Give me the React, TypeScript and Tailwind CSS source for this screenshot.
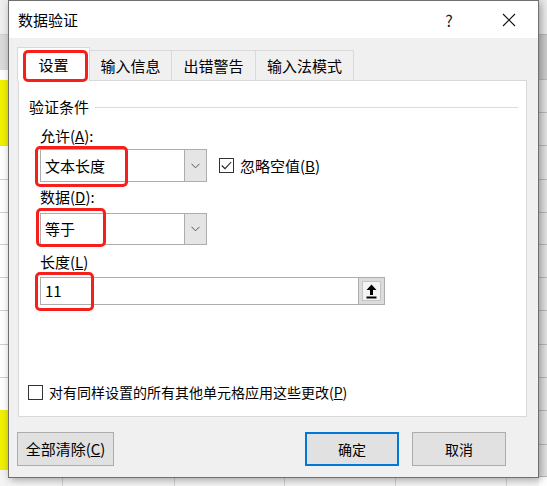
import React from "react";

const leftRows: [number, string, boolean][] = [
  [35, "bg-[#efefef]", true],
  [35, "bg-[#dadada]", false],
  [10, "bg-white", false],
  [66, "bg-[#f0f000]", true],
  [34, "bg-white", true],
  [33, "bg-white", true],
  [32, "bg-white", true],
  [33, "bg-white", true],
  [33, "bg-white", true],
  [34, "bg-white", true],
  [33, "bg-white", true],
  [32, "bg-white", false],
  [60, "bg-[#f0f000]", false],
  [16, "bg-[#f4f4f4]", false],
];

const rightRows: [number, string][] = [
  [35, "bg-[#ececec]"],
  [45, "bg-[#cdcdcd]"],
  [33, "bg-[#e4e4e4]"],
  [33, "bg-[#e4e4e4]"],
  [34, "bg-[#e4e4e4]"],
  [33, "bg-[#e4e4e4]"],
  [32, "bg-[#e4e4e4]"],
  [33, "bg-[#e4e4e4]"],
  [33, "bg-[#e4e4e4]"],
  [34, "bg-[#e4e4e4]"],
  [33, "bg-[#e4e4e4]"],
  [33, "bg-[#e4e4e4]"],
  [34, "bg-[#e4e4e4]"],
  [32, "bg-[#e4e4e4]"],
];

function Red({ className }: { className: string }) {
  return <div className={`absolute border-[3px] border-[#f5201c] rounded-[5px] pointer-events-none ${className}`} />;
}

function Chevron() {
  return (
    <svg width="9" height="6" viewBox="0 0 9 6" className="text-[#555]">
      <path d="M0.5 0.8 L4.5 4.8 L8.5 0.8" fill="none" stroke="currentColor" strokeWidth="1" />
    </svg>
  );
}

function Combo({ value, h }: { value: string; h: string }) {
  return (
    <div className={`flex w-[167px] ${h} border border-[#adadad] bg-white`}>
      <div className="flex-1 flex items-center pl-[4px] text-[15px]">{value}</div>
      <div className="w-[22px] flex items-center justify-center bg-[#e5e5e5] border-l border-[#adadad]">
        <Chevron />
      </div>
    </div>
  );
}

function Tab({ label, w }: { label: string; w: string }) {
  return (
    <div className={`${w} h-[30px] -ml-px border border-b-0 border-[#d9d9d9] bg-[#f0f0f0] flex items-center justify-center text-[15px]`}>
      {label}
    </div>
  );
}

export default function App() {
  return (
    <div className="w-[547px] h-[486px] overflow-hidden flex font-['Noto_Sans_CJK_SC',sans-serif] text-black leading-[20px]">
      {/* sheet behind, left */}
      <div className="w-[8px] shrink-0 flex flex-col">
        {leftRows.map(([h, bg, line], i) => (
          <div key={i} style={{ height: h }} className={`${bg} ${line ? "border-b border-[#d0d0d0]" : ""}`} />
        ))}
      </div>

      <div className="w-[531px] shrink-0 flex flex-col">
        {/* dialog */}
        <div className="relative z-10 h-[478px] border border-[#707070] bg-[#f0f0f0] flex flex-col shadow-[2px_2px_8px_rgba(0,0,0,0.35)]">
          <div className="h-[37px] bg-white flex items-center pl-[9px] text-[15px]">
            <span className="flex-1">数据验证</span>
            <span className="w-[20px] text-center text-[#222] text-[16px] mr-[43px]">?</span>
            <svg width="14" height="14" viewBox="0 0 14 14" className="mr-[22px]">
              <path d="M1 1 L13 13 M13 1 L1 13" stroke="#111" strokeWidth="1.1" />
            </svg>
          </div>

          <div className="flex-1 pt-[9px] pl-[9px] pr-[11px] flex flex-col">
            {/* tabs */}
            <div className="flex items-end h-[33px] -ml-px relative z-10">
              <div className="relative w-[73px] h-[34px] -mb-px bg-white border border-b-0 border-[#d9d9d9] flex items-center justify-center text-[15px]">
                设置
                <Red className="left-[5px] top-[2px] w-[65px] h-[32px]" />
              </div>
              <Tab label="输入信息" w="w-[83px]" />
              <Tab label="出错警告" w="w-[85px]" />
              <Tab label="输入法模式" w="w-[99px]" />
            </div>

            {/* panel */}
            <div className="h-[337px] w-[509px] bg-white border border-[#d9d9d9] flex flex-col">
              <div className="mt-[16px] pl-[10px] flex items-center text-[15px]">
                <span>验证条件</span>
                <div className="flex-1 ml-[6px] mr-[8px] border-t border-[#dcdcdc]" />
              </div>

              <div className="pl-[21px] flex flex-col">
                <div className="mt-[9px] text-[15px]">
                  允许(<span className="underline">A</span>):
                </div>
                <div className="mt-[3px] flex items-center">
                  <div className="relative">
                    <Combo value="文本长度" h="h-[33px]" />
                    <Red className="-left-[5px] -top-[3px] w-[93px] h-[41px]" />
                  </div>
                  <div className="ml-[12px] flex items-center text-[15px]">
                    <div className="w-[15px] h-[15px] border border-[#333] flex items-center justify-center">
                      <svg width="11" height="9" viewBox="0 0 11 9">
                        <path d="M0.8 4.5 L4 7.7 L10.2 1" fill="none" stroke="#222" strokeWidth="1.1" />
                      </svg>
                    </div>
                    <span className="ml-[6px]">
                      忽略空值(<span className="underline">B</span>)
                    </span>
                  </div>
                </div>

                <div className="mt-[5px] text-[15px]">
                  数据(<span className="underline">D</span>):
                </div>
                <div className="mt-[6px] relative w-[167px]">
                  <Combo value="等于" h="h-[32px]" />
                  <Red className="-left-[4px] -top-[5px] w-[70px] h-[39px]" />
                </div>

                <div className="mt-[7px] text-[15px]">
                  长度(<span className="underline">L</span>)
                </div>
                <div className="mt-[5px] flex">
                  <div className="relative w-[318px] h-[28px] border border-[#adadad] border-r-0 bg-white flex items-center pl-[4px] text-[15px]">
                    11
                    <Red className="-left-[6px] -top-[6px] w-[59px] h-[39px]" />
                  </div>
                  <div className="w-[27px] h-[28px] bg-[#dcdcdc] border border-[#adadad] flex items-center justify-center">
                    <div className="w-[19px] h-[20px] bg-[#f4f4f4] border border-[#c4c4c4] flex items-center justify-center">
                      <svg width="11" height="15" viewBox="0 0 11 15">
                        <path d="M5.5 0.5 L10.5 6 L7 6 L7 11 L4 11 L4 6 L0.5 6 Z" fill="#000" />
                        <rect x="0.5" y="12.5" width="10" height="2" fill="#000" />
                      </svg>
                    </div>
                  </div>
                </div>
              </div>

              <div className="mt-[77px] pl-[9px] flex items-center text-[14px]">
                <div className="w-[15px] h-[15px] border border-[#333] bg-white" />
                <span className="ml-[6px]">
                  对有同样设置的所有其他单元格应用这些更改(<span className="underline">P</span>)
                </span>
              </div>
            </div>

            {/* buttons */}
            <div className="mt-[15px] flex items-center">
              <button className="-ml-px w-[97px] h-[34px] bg-[#e1e1e1] border border-[#adadad] text-[15px]">
                全部清除(<span className="underline">C</span>)
              </button>
              <div className="flex-1" />
              <button className="w-[94px] h-[34px] bg-[#e1e1e1] border-2 border-[#0078d7] text-[14px]">确定</button>
              <button className="ml-[13px] mr-[21px] w-[94px] h-[34px] bg-[#e1e1e1] border border-[#adadad] text-[14px]">
                取消
              </button>
            </div>
          </div>
        </div>

        {/* sheet behind, bottom */}
        <div className="flex-1 flex bg-[#f6f6f6]">
          <div className="w-[55px] border-r border-[#d4d4d4]" />
          <div className="w-[112px] border-r border-[#d4d4d4]" />
          <div className="w-[110px] border-r border-[#d4d4d4]" />
          <div className="w-[111px] border-r border-[#d4d4d4]" />
          <div className="w-[111px] border-r border-[#d4d4d4]" />
        </div>
      </div>

      {/* sheet behind, right */}
      <div className="flex-1 flex flex-col">
        {rightRows.map(([h, bg], i) => (
          <div key={i} style={{ height: h }} className={`${bg} border-b border-[#bababa]`} />
        ))}
      </div>
    </div>
  );
}
